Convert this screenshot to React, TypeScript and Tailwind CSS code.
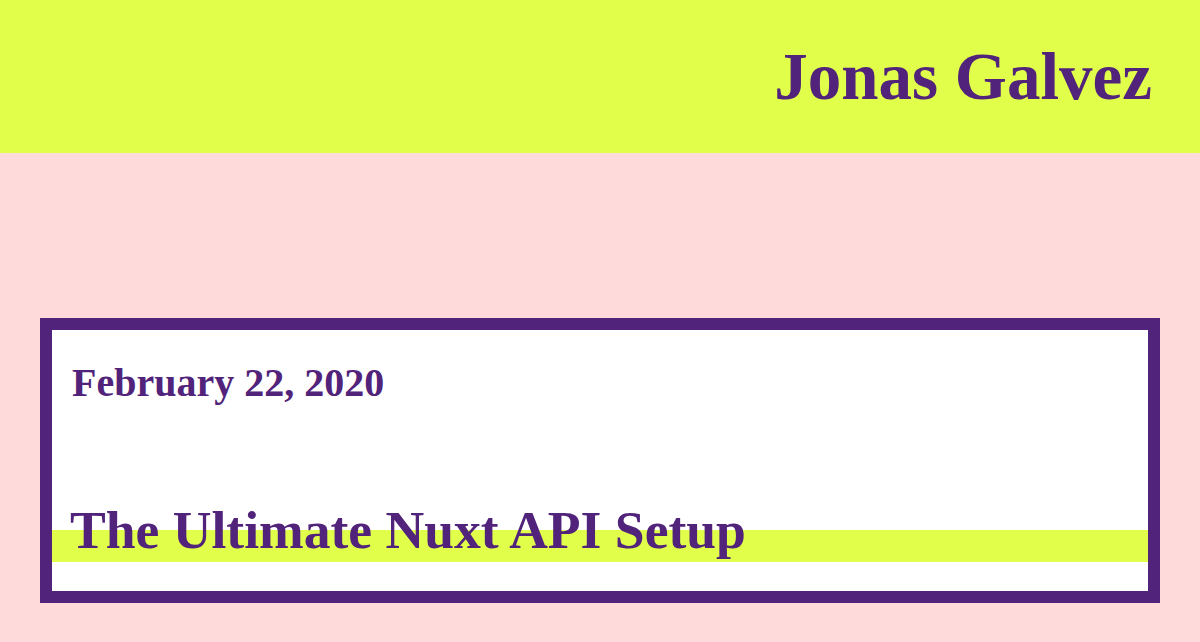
export default function App() {
  const serif = { fontFamily: '"Liberation Serif", "Times New Roman", serif' };
  return (
    <div className="min-h-[642px] w-full bg-[#ffdada]" style={serif}>
      <header className="flex h-[153px] justify-end bg-[#e1ff4a] pr-[48px] pt-[43px]">
        <h1 className="text-[67px] font-bold leading-none text-[#51237a]">Jonas Galvez</h1>
      </header>
      <main className="pl-[40px] pr-[40px] pt-[165px]">
        <article className="box-border h-[285px] border-[12px] border-[#51237a] bg-white pt-[33px]">
          <div className="pl-[20px] text-[40px] font-bold leading-none text-[#51237a]">February 22, 2020</div>
          <div className="relative mt-[101px]">
            <div className="absolute left-0 right-0 top-[26px] h-[32px] bg-[#e1ff4a]" />
            <h2 className="relative pl-[18px] text-[53.6px] font-bold leading-none text-[#51237a]">
              The Ultimate Nuxt API Setup
            </h2>
          </div>
        </article>
      </main>
    </div>
  );
}
